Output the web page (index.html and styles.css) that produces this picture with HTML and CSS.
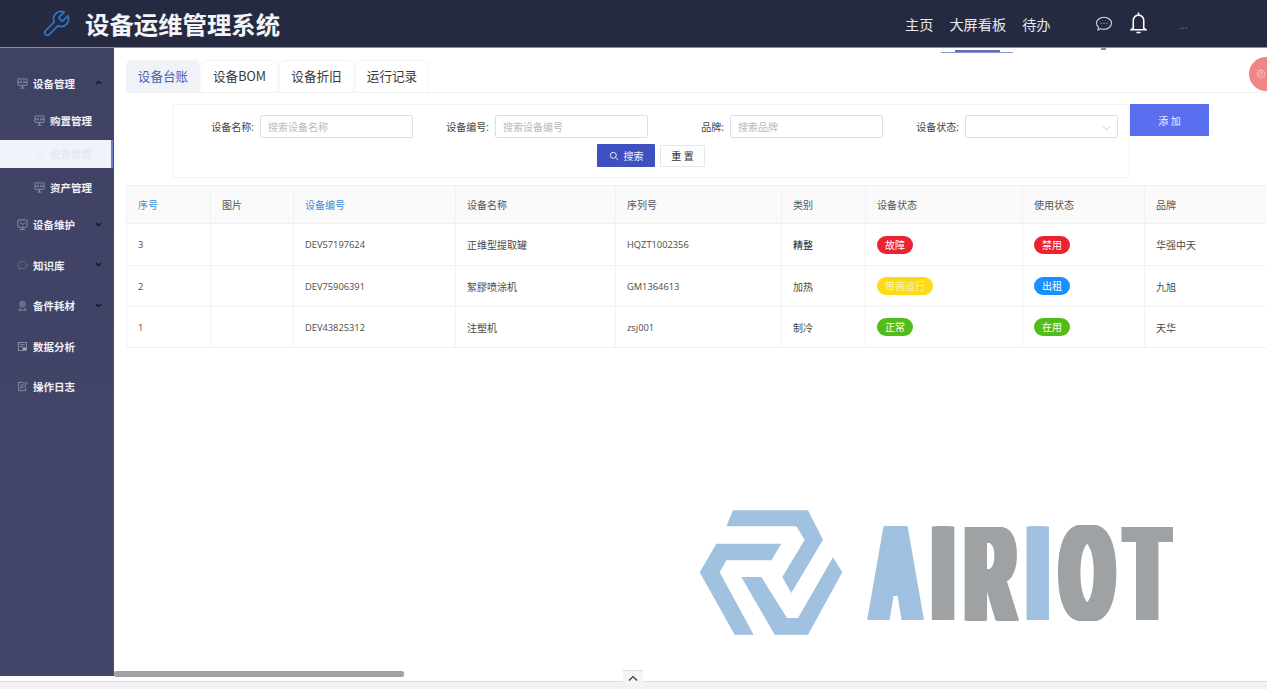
FILE: index.html
```html
<!DOCTYPE html>
<html lang="zh-CN">
<head>
<meta charset="utf-8">
<title>设备运维管理系统</title>
<link rel="stylesheet" href="styles.css">
</head>
<body>
<svg class="defs" width="0" height="0" aria-hidden="true">
  <symbol id="i-screen" viewBox="0 0 12 12"><g fill="none" stroke="currentColor" stroke-width=".7"><rect x="1" y="1" width="10" height="7" rx=".6"/><path d="M6 8v3M3.500 11h5M1 4.500h3.500M7.500 4.500H11M4.500 3v3M7.500 3v3"/></g></symbol>
  <symbol id="i-screen2" viewBox="0 0 12 12"><g fill="none" stroke="currentColor" stroke-width=".7"><rect x="1" y="1" width="10" height="8" rx=".6"/><path d="M6 9v2.500M3 11.500h6M3 3l3 3 3-2"/></g></symbol>
  <symbol id="i-chat" viewBox="0 0 12 12"><g fill="none" stroke="currentColor" stroke-width=".7"><path d="M6 1.500c2.800 0 5 1.800 5 4s-2.200 4-5 4c-.8 0-1.500-.1-2.200-.4L2 10l.3-1.900C1.500 7.400 1 6.500 1 5.500c0-2.200 2.200-4 5-4z"/><path d="M3.800 5.500h.6M5.700 5.500h.6M7.600 5.500h.6"/></g></symbol>
  <symbol id="i-user" viewBox="0 0 12 12"><g fill="none" stroke="currentColor" stroke-width=".7"><circle cx="6" cy="4.500" r="3"/><circle cx="6" cy="4.500" r="1.200"/><path d="M1.500 11h9M3.500 8.500 3 11M8.500 8.500l.5 2.500"/></g></symbol>
  <symbol id="i-data" viewBox="0 0 12 12"><g fill="none" stroke="currentColor" stroke-width=".7"><rect x="1.500" y="1.500" width="9" height="9"/><path d="M3.500 4h5M3.500 6h3"/><rect x="6.500" y="7.500" width="3" height="2" fill="currentColor"/></g></symbol>
  <symbol id="i-edit" viewBox="0 0 12 12"><g fill="none" stroke="currentColor" stroke-width=".7"><path d="M9.500 6v4.500h-8v-9H7"/><path d="M4 8l.5-2L9.500 1l1.500 1.500-5 5zM3.500 4.500h2"/></g></symbol>
</svg>

<header class="topbar">
  <div class="brand">
    <svg class="wrench" viewBox="0 0 24 24"><path d="M14.700 6.300a1 1 0 0 0 0 1.400l1.600 1.600a1 1 0 0 0 1.400 0l3.770-3.770a6 6 0 0 1-7.940 7.940l-6.910 6.910a2.120 2.120 0 0 1-3-3l6.910-6.910a6 6 0 0 1 7.940-7.940l-3.760 3.760z"/></svg>
    <h1 class="title">设备运维管理系统</h1>
  </div>
  <nav class="topnav">
    <a class="topnav-link">主页</a>
    <a class="topnav-link">大屏看板</a>
    <a class="topnav-link">待办</a>
  </nav>
  <div class="top-tools">
    <svg class="chat-icon"><use href="#i-chat"/></svg>
    <svg class="bell-icon" viewBox="0 0 16 21"><path d="M8 .5v2.500M3 15.500V8a5 5 0 0 1 10 0v7.500l2 1.500H1zM6 19.500h4"/></svg>
    <span class="more">...</span>
  </div>
</header>

<div class="nav-underline"></div>
<div class="nav-underline-core"></div>
<div class="nav-tick"></div>

<div class="shell">
  <aside class="sidebar">
    <div class="menu-item first"><svg class="mi"><use href="#i-screen"/></svg><span class="menu-text">设备管理</span><svg class="caret" viewBox="0 0 8 6"><path d="M1 4.500 4 2l3 2.500"/></svg></div>
    <div class="sub-item"><svg class="mi"><use href="#i-screen"/></svg><span class="menu-text">购置管理</span></div>
    <div class="sub-item active"><svg class="mi"><use href="#i-screen"/></svg><span class="menu-text">设备管理</span></div>
    <div class="sub-item last"><svg class="mi"><use href="#i-screen"/></svg><span class="menu-text">资产管理</span></div>
    <div class="menu-item"><svg class="mi"><use href="#i-screen2"/></svg><span class="menu-text">设备维护</span><svg class="caret" viewBox="0 0 8 6"><path d="M1 1.500 4 4l3-2.500"/></svg></div>
    <div class="menu-item"><svg class="mi dim"><use href="#i-chat"/></svg><span class="menu-text">知识库</span><svg class="caret" viewBox="0 0 8 6"><path d="M1 1.500 4 4l3-2.500"/></svg></div>
    <div class="menu-item"><svg class="mi"><use href="#i-user"/></svg><span class="menu-text">备件耗材</span><svg class="caret" viewBox="0 0 8 6"><path d="M1 1.500 4 4l3-2.500"/></svg></div>
    <div class="menu-item"><svg class="mi"><use href="#i-data"/></svg><span class="menu-text">数据分析</span></div>
    <div class="menu-item"><svg class="mi"><use href="#i-edit"/></svg><span class="menu-text">操作日志</span></div>
  </aside>

  <main class="content">
    <div class="tabs">
      <a class="tab active">设备台账</a>
      <a class="tab">设备BOM</a>
      <a class="tab">设备折旧</a>
      <a class="tab">运行记录</a>
    </div>

    <div class="toolbar">
      <form class="search-box">
        <div class="fields">
          <label class="field"><span class="field-label">设备名称:</span><span class="input placeholder">搜索设备名称</span></label>
          <label class="field"><span class="field-label">设备编号:</span><span class="input placeholder">搜索设备编号</span></label>
          <label class="field"><span class="field-label">品牌:</span><span class="input placeholder">搜索品牌</span></label>
          <label class="field"><span class="field-label">设备状态:</span><span class="input select"><svg class="select-caret" viewBox="0 0 10 6"><path d="M1 1l4 4 4-4"/></svg></span></label>
        </div>
        <div class="actions">
          <a class="btn btn-primary"><svg class="search-icon" viewBox="0 0 10 10"><circle cx="4.300" cy="4.300" r="3"/><path d="M6.500 6.500 9 9"/></svg>搜索</a>
          <a class="btn btn-plain">重 置</a>
        </div>
      </form>
      <a class="btn-add">添 加</a>
    </div>

    <table class="grid">
      <colgroup><col class="c1"><col class="c2"><col class="c3"><col class="c4"><col class="c5"><col class="c6"><col class="c7"><col class="c8"><col class="c9"></colgroup>
      <thead>
        <tr><th class="sortable">序号</th><th>图片</th><th class="sortable">设备编号</th><th>设备名称</th><th>序列号</th><th>类别</th><th>设备状态</th><th>使用状态</th><th>品牌</th></tr>
      </thead>
      <tbody>
        <tr class="row-a"><td class="code">3</td><td></td><td class="code">DEV57197624</td><td>正维型提取罐</td><td class="code">HQZT1002356</td><td class="strong">精整</td><td><span class="badge red">故障</span></td><td><span class="badge red">禁用</span></td><td>华强中天</td></tr>
        <tr class="row-b"><td class="code">2</td><td></td><td class="code">DEV75906391</td><td>絮膠喷涂机</td><td class="code">GM1364613</td><td>加热</td><td><span class="badge yellow">带病运行</span></td><td><span class="badge blue">出租</span></td><td>九旭</td></tr>
        <tr class="row-b"><td class="code">1</td><td></td><td class="code">DEV43825312</td><td>注塑机</td><td class="code">zsj001</td><td>制冷</td><td><span class="badge green">正常</span></td><td><span class="badge green">在用</span></td><td>天华</td></tr>
      </tbody>
    </table>

    <div class="watermark">
      <svg class="wm-mark" viewBox="55 58 438 382"><path d="M160 62h225l45 88-95 160-27-48 67-112-25-40H140z"/><path d="M110 162h195l-30 50H140l-20 36 102 187h-57L60 248z"/><path d="M185 262h60l77 123h33l105-182 28 45-103 187H285z"/></svg>
      <div class="wm-text"><span class="wm-blue">A</span><span class="wm-gray">IR</span><span class="wm-blue">I</span><span class="wm-gray">OT</span></div>
    </div>
  </main>
</div>

<div class="hscroll"><div class="hscroll-thumb"></div></div>
<footer class="bottom-bar"></footer>
<div class="collapse-tab"><svg viewBox="0 0 10 6"><path d="M1 5l4-4 4 4"/></svg></div>
<div class="settings-fab"><svg viewBox="0 0 24 24"><path d="M12 3l2 2.500 3.200-.5 1 3 3 1.200-.8 2.800 1.800 2.500-2.500 1.800-.2 3.200-3.200.1L12 21.500l-2.300-1.900-3.200-.1-.2-3.200L3.800 14.500l1.800-2.500-.8-2.800 3-1.200 1-3 3.200.5z"/><circle cx="12" cy="12" r="3.500"/></svg></div>
</body>
</html>
```

FILE: styles.css
```css
* { box-sizing: border-box; }
html, body { height: 100%; }
body {
  margin: 0;
  height: 689px;
  overflow: hidden;
  position: relative;
  display: flex;
  flex-direction: column;
  background: #fff;
  color: #444;
  font-family: "Open Sans", "Noto Sans CJK SC", sans-serif;
  font-size: 10px;
}
.defs { position: absolute; }

/* top bar */
.topbar {
  flex: 0 0 48px;
  height: 48px;
  display: flex;
  align-items: center;
  background: #252a40;
  border-bottom: 1px solid #8b8fa6;
}
.brand { display: flex; align-items: center; padding-left: 41px; width: 905px; }
.wrench { width: 30px; height: 30px; fill: none; stroke: #2b7bc9; stroke-width: 1.3; margin-right: 14px; flex: none; }
.title { margin: 0; font-size: 24.4px; font-weight: 700; color: #f4f5f8; font-family: "Noto Sans CJK SC", sans-serif; line-height: 47px; }
.topnav { display: flex; gap: 16px; }
.topnav-link { color: #e8e9ee; font-size: 14.200px; font-family: "Noto Sans CJK SC", sans-serif; }
.top-tools { display: flex; align-items: center; margin-left: 44px; }
.chat-icon { width: 18px; height: 18px; color: #d6d8e0; }
.bell-icon { width: 17px; height: 22px; margin: -2px 0 0 17px; fill: none; stroke: #fff; stroke-width: 1.500; }
.more { color: #7d8196; margin-left: 33px; font-size: 10px; margin-top: 2px; }

.nav-underline { position: absolute; left: 941px; top: 52px; width: 72px; height: 1px; background: #8d95c9; }
.nav-underline-core { position: absolute; left: 955px; top: 50px; width: 45px; height: 2px; background: #5f6dbb; }
.nav-tick { position: absolute; left: 1101px; top: 48px; width: 5px; height: 2px; background: #7f86c4; }

/* shell */
.shell { flex: 0 0 628px; display: flex; min-height: 0; }
.sidebar {
  flex: 0 0 114px;
  height: 628px;
  padding-top: 14.400px;
  background: linear-gradient(180deg, #3f4263 0%, #43456a 100%);
  color: #eef0f6;
  border-right: 1px solid #4a4d70;
}
.menu-item, .sub-item {
  display: flex;
  align-items: center;
  font-size: 10.500px;
  font-weight: 700;
  font-family: "Noto Sans CJK SC", sans-serif;
}
.menu-item { height: 40.500px; padding-left: 17px; position: relative; }
.menu-item.first { height: 42px; }
.sub-item { height: 32px; padding-left: 34px; }
.sub-item.active {
  height: 28px;
  margin: 3.600px 0 3.400px;
  background: #f0f3fa;
  color: #e4e8f4;
  border-right: 2px solid #6b7dd0;
  width: 113px;
}
.sub-item.last { margin-bottom: 1px; }
.mi { width: 11px; height: 11px; margin-right: 5px; color: #aeb0c2; flex: none; }
.mi.dim { color: #84879f; }
.sub-item.active .mi { color: #e9ecf5; }
.caret { position: absolute; left: 95px; top: 50%; width: 7px; height: 5px; margin-top: -3px; fill: none; stroke: #1a1d33; stroke-width: 2; }

/* content */
.content { flex: 1; min-width: 0; padding: 12px 0 0 12px; position: relative; }
.tabs { display: flex; gap: 1px; height: 33px; border-bottom: 1px solid #f2f2f2; }
.tab {
  width: 74px;
  height: 32px;
  display: flex;
  align-items: center;
  justify-content: center;
  padding-bottom: 2px;
  font-size: 12.600px;
  color: #3a3a3a;
  font-family: "Noto Sans CJK SC", sans-serif;
  border: 1px solid #f4f4f4;
  border-bottom: 0;
  border-radius: 6px 6px 0 0;
}
.tab:nth-child(2) { width: 77px; }
.tab:nth-child(3) { width: 75px; }
.tab.active { color: #4a5fb5; background: #eff2f6; border-color: #eff2f6; }

.toolbar { display: flex; align-items: flex-start; margin: 11px 0 0 46px; }
.search-box {
  width: 958px;
  height: 74px;
  border: 1px solid #f3f3f3;
  border-radius: 3px;
  padding: 10px 11px 0 5px;
}
.fields { display: flex; height: 23px; }
.field { flex: 0 0 235px; display: flex; align-items: center; justify-content: flex-end; }
.field-label { color: #444; margin-right: 6px; white-space: nowrap; font-size: 10px; }
.input {
  width: 153px;
  height: 23px;
  border: 1px solid #dcdfe6;
  border-radius: 2px;
  padding-left: 7px;
  display: flex;
  align-items: center;
  position: relative;
}
.placeholder { color: #b6b9c2; }
.select-caret { position: absolute; right: 6px; top: 9px; width: 9px; height: 6px; fill: none; stroke: #c0c4cc; stroke-width: 1; }
.actions { display: flex; justify-content: center; align-items: center; gap: 5px; margin-top: 6px; padding-left: 6px; }
.btn { height: 23px; display: flex; align-items: center; justify-content: center; border-radius: 1px; font-size: 10px; }
.btn-primary { width: 58px; background: #3f51c0; color: #eef0fa; }
.search-icon { width: 10px; height: 10px; margin-right: 5px; fill: none; stroke: #e8ebf8; stroke-width: 1; }
.btn-plain { width: 45px; height: 22px; border: 1px solid #e6e6e6; color: #333; }
.btn-add {
  width: 79px;
  height: 32px;
  background: #5a6ff0;
  color: #eef0ff;
  display: flex;
  align-items: center;
  justify-content: center;
  font-size: 10px;
}

/* table */
.grid { border-collapse: collapse; table-layout: fixed; width: 1141px; margin-top: 7px; }
.c1 { width: 84px; } .c2 { width: 83px; } .c3 { width: 162px; } .c4 { width: 160px; }
.c5 { width: 166px; } .c6 { width: 84px; } .c7 { width: 157px; } .c8 { width: 122px; } .c9 { width: 123px; }
.grid th, .grid td {
  border: 1px solid #f2f2f2;
  padding: 0 0 0 11px;
  text-align: left;
  font-size: 10px;
  font-weight: 400;
  color: #4a4a4a;
}
.grid th { height: 38px; background: #fafafa; color: #555; }
.grid th:last-child, .grid td:last-child { border-right: 0; }
.grid th.sortable { color: #3f8fd8; }
.row-a td { height: 42px; }
.row-b td { height: 41px; }
.grid td.code { font-size: 9.300px; }
.grid td.strong { color: #222; }
.badge {
  display: inline-block;
  height: 18px;
  line-height: 18px;
  padding: 0 8px;
  border-radius: 9px;
  color: #fff;
  font-size: 10px;
  white-space: nowrap;
  vertical-align: middle;
}
.red { background: #ea2231; }
.yellow { background: #fadb14; color: #fdf3b0; }
.blue { background: #1890ff; }
.green { background: #52bd1a; }

/* watermark */
.watermark { position: absolute; left: 584px; top: 461px; width: 480px; height: 128px; display: flex; }
.wm-mark { width: 146px; height: 127.300px; fill: #a0c1e0; flex: none; }
.wm-text {
  position: absolute;
  left: 173.500px;
  top: -4px;
  font-family: "Liberation Sans", sans-serif;
  font-weight: 700;
  font-size: 136px;
  line-height: 1;
  letter-spacing: 30.800px;
  white-space: nowrap;
  transform: scaleX(.48);
  transform-origin: 0 0;
  text-shadow: 2px 0, -2px 0, 4px 0, -4px 0, 6px 0, -6px 0, 8px 0, -8px 0, 10px 0, -10px 0, 12px 0, -12px 0, 13.500px 0, -13.500px 0;
}
.wm-blue { color: #a0c1e0; }
.wm-gray { color: #9fa2a4; }

/* bottom */
.hscroll { flex: 0 0 5px; position: relative; background: #fff; }
.hscroll-thumb { position: absolute; left: 114px; top: -5px; width: 290px; height: 6px; border-radius: 2px; background: #a3a3a3; }
.bottom-bar { flex: 0 0 8px; background: #f1f1f6; border-top: 1px solid #dcdce2; }
.collapse-tab { position: absolute; left: 623px; top: 670px; width: 20px; height: 19px; background: #f4f4f6; border-top: 1px solid #dcdcdc; display: flex; justify-content: center; padding-top: 4px; }
.collapse-tab svg { width: 10px; height: 7px; fill: none; stroke: #333; stroke-width: 1.200; }
.settings-fab { position: absolute; left: 1249px; top: 57px; width: 34px; height: 34px; border-radius: 50%; background: #f08585; padding: 11px 0 0 6px; }
.settings-fab svg { display: block; width: 11px; height: 11px; fill: none; stroke: #f7c9c9; stroke-width: 2; }
```
